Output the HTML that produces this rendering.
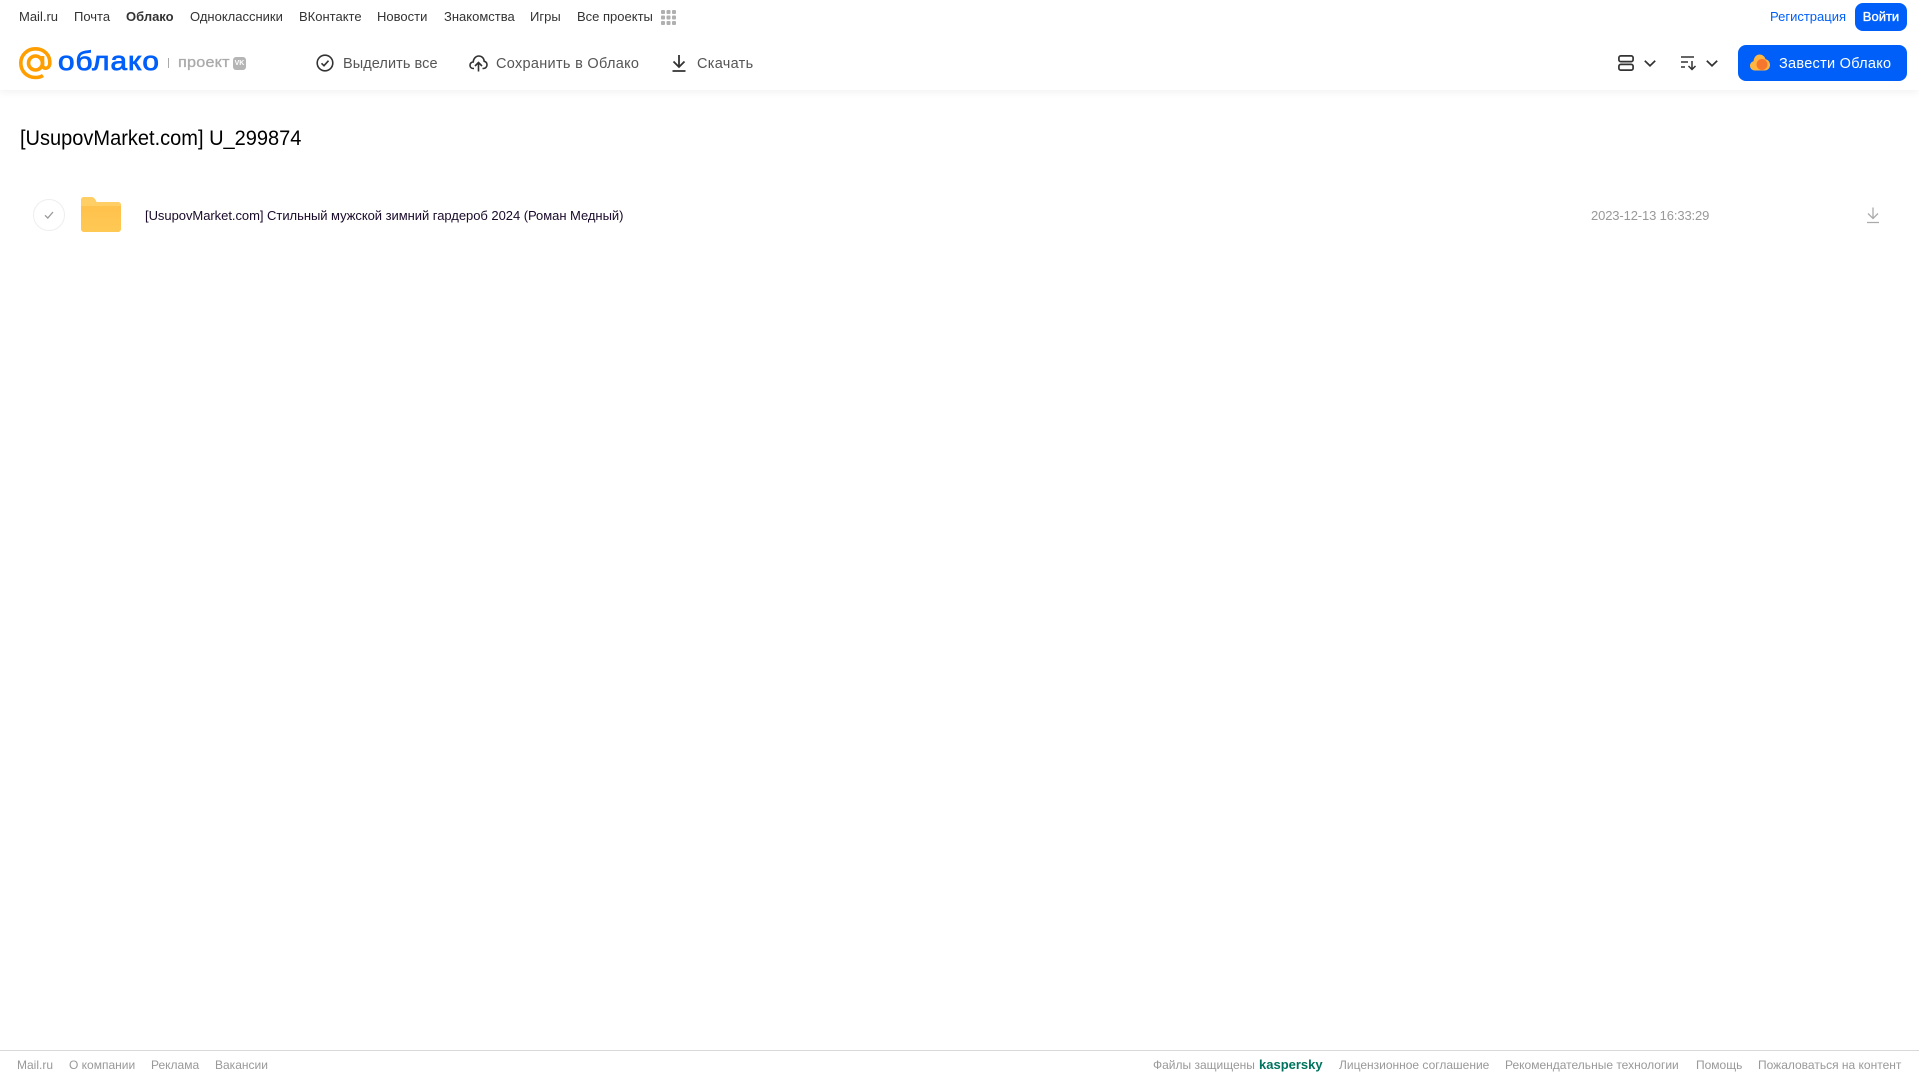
<!DOCTYPE html>
<html lang="ru"><head><meta charset="utf-8"><title>Облако</title>
<style>
html,body{margin:0;padding:0;background:#fff;width:1919px;height:1079px;overflow:hidden}
body{position:relative;font-family:"Liberation Sans",sans-serif;color:#333}
.t{position:absolute;white-space:nowrap;line-height:16px}
.n{top:9px;font-size:13px;color:#333}
.a{top:55px;font-size:14.5px;color:#555;line-height:18px}
.f{top:1057px;font-size:12px;color:#999}
svg{position:absolute;overflow:visible}
#hd{position:absolute;left:0;top:0;width:1919px;height:90px;background:#fff;box-shadow:0 2px 8px rgba(0,0,0,.06)}
#ft{position:absolute;left:0;top:1050px;width:1919px;height:1px;background:#d9d9d9}
</style></head><body>
<div id="hd"></div>
<span class="t n" style="left:19px">Mail.ru</span>
<span class="t n" style="left:74px">Почта</span>
<span class="t n" style="left:126px;font-weight:bold">Облако</span>
<span class="t n" style="left:190px">Одноклассники</span>
<span class="t n" style="left:299px">ВКонтакте</span>
<span class="t n" style="left:377px">Новости</span>
<span class="t n" style="left:444px">Знакомства</span>
<span class="t n" style="left:530px">Игры</span>
<span class="t n" style="left:577px">Все проекты</span>
<svg style="left:661px;top:10px" width="15" height="15" fill="#b0b0b0"><rect width="4" height="4" rx="1"/><rect x="5.500" width="4" height="4" rx="1"/><rect x="11" width="4" height="4" rx="1"/><rect y="5.500" width="4" height="4" rx="1"/><rect x="5.500" y="5.500" width="4" height="4" rx="1"/><rect x="11" y="5.500" width="4" height="4" rx="1"/><rect y="11" width="4" height="4" rx="1"/><rect x="5.500" y="11" width="4" height="4" rx="1"/><rect x="11" y="11" width="4" height="4" rx="1"/></svg>
<span class="t" style="left:1770px;top:9px;font-size:13px;color:#005ff9">Регистрация</span>
<div style="position:absolute;left:1855px;top:3px;width:52px;height:28px;border-radius:8px;background:#005ff9;color:#fff;font-size:13px;-webkit-text-stroke:.35px #fff;line-height:28px;text-align:center">Войти</div>

<svg style="left:19px;top:47px" width="33" height="33" viewBox="0 0 33 33" fill="none" stroke="#ff9e00" stroke-width="3.600"><circle cx="16.500" cy="16" r="7"/><path d="M23.500 9V18C23.500 22.500 30 22.500 30.800 17C31.500 8 25 1.800 16.500 1.800C8 1.800 1.800 8.200 1.800 16C1.800 24.500 8.200 30.500 16.500 30.500C19.500 30.500 22 29.800 24 28.500"/></svg>
<span class="t" style="left:58px;top:45px;font-size:27px;line-height:32px;color:#005ff9;-webkit-text-stroke:.8px #005ff9;letter-spacing:.9px;transform:scaleX(1.1);transform-origin:0 50%">облако</span>
<div style="position:absolute;left:168px;top:58px;width:1px;height:10px;background:#aaa"></div>
<span class="t" style="left:178px;top:54px;font-size:15px;line-height:17px;color:#aaa;-webkit-text-stroke:.3px #aaa;letter-spacing:.2px;transform:scaleX(1.08);transform-origin:0 50%">проект</span>
<div style="position:absolute;left:233px;top:57px;width:13px;height:13px;border-radius:3px;background:#b5b5b5;color:#fff;font-size:7px;font-weight:bold;line-height:13px;text-align:center">VK</div>

<svg style="left:316px;top:54px" width="18" height="18" fill="none" stroke="#333" stroke-width="1.600"><circle cx="9" cy="9" r="7.800"/><path d="M5.500 9.300L8 11.700L12.500 6.700"/></svg>
<span class="t a" style="left:343px;letter-spacing:.07px">Выделить все</span>
<svg style="left:469px;top:54px" width="19" height="18" fill="none" stroke="#333" stroke-width="1.600"><path d="M5 14.500H4.500C2.300 14.500 1 13 1 11.200C1 9.300 2.500 8 4.200 8C4.500 4.500 6.800 2 9.800 2C13 2 15 4.300 15.200 7.300C17 7.700 18 9.200 18 10.800C18 12.800 16.500 14.500 14.300 14.500H13.500"/><path d="M9.500 17.500V8.500M6 12L9.500 8.500L13 12"/></svg>
<span class="t a" style="left:496px;letter-spacing:.3px">Сохранить в Облако</span>
<svg style="left:671px;top:54px" width="16" height="18" fill="none" stroke="#333" stroke-width="1.800"><path d="M8 1V12.500M2.500 7.500L8 13L13.500 7.500M1.500 17H14.500"/></svg>
<span class="t a" style="left:697px;letter-spacing:.3px">Скачать</span>

<svg style="left:1618px;top:55px" width="16" height="16" fill="none" stroke="#333" stroke-width="1.700"><rect x=".9" y=".9" width="14.200" height="5.700" rx="1.800"/><rect x=".9" y="9.400" width="14.200" height="5.700" rx="1.800"/></svg>
<svg style="left:1644px;top:60px" width="12" height="7" fill="none" stroke="#333" stroke-width="1.700"><path d="M.8 .8L6 5.800L11.200 .8"/></svg>
<svg style="left:1681px;top:56px" width="16" height="14" fill="none" stroke="#333" stroke-width="1.500"><path d="M0 1H13M0 6H7M0 11H4M11 5V13.500M7.500 10L11 13.500L14.500 10"/></svg>
<svg style="left:1706px;top:60px" width="12" height="7" fill="none" stroke="#333" stroke-width="1.700"><path d="M.8 .8L6 5.800L11.200 .8"/></svg>
<div style="position:absolute;left:1738px;top:45px;width:169px;height:36px;border-radius:8px;background:#005ff9"></div>
<svg style="left:1750px;top:54px" width="20" height="17"><path d="M5 16.500C2 16.500 0 14.500 0 11.800C0 9.500 1.500 7.800 3.500 7.300C4 3 6.500 .5 9.500 .5C12.500 .5 14.800 2.500 15.500 5.300C18 5.800 20 8 20 11C20 14.300 17.500 16.500 14.500 16.500Z" fill="#ffb640"/><circle cx="12" cy="10.500" r="5.500" fill="#f5762c"/></svg>
<span class="t a" style="left:1779px;color:#fff;letter-spacing:.28px">Завести Облако</span>

<span class="t" style="left:20px;top:127px;font-size:21px;line-height:24px;color:#000;transform:scaleX(.953);transform-origin:0 50%">[UsupovMarket.com] U_299874</span>
<svg style="left:33px;top:199px" width="32" height="32" fill="none"><circle cx="16" cy="16" r="15.500" stroke="#eee"/><path d="M12 16.300L14.800 19L20 13" stroke="#999" stroke-width="1.300"/></svg>
<svg style="left:81px;top:197px" width="40" height="35"><defs><linearGradient id="g" x1="0" y1="0" x2="0" y2="1"><stop offset="0" stop-color="#ffbf48"/><stop offset="1" stop-color="#ffc955"/></linearGradient></defs><path d="M0 3C0 1.300 1.300 0 3 0H10C12 0 13.500 1 14.500 3L15.500 5H37C38.700 5 40 6.300 40 8V32C40 33.700 38.700 35 37 35H3C1.300 35 0 33.700 0 32Z" fill="url(#g)"/><path d="M0 3C0 1.300 1.300 0 3 0H10C12 0 13.500 1 14.500 3L15.500 5H37C38.700 5 40 6.300 40 8V9H0Z" fill="#ffcf66"/></svg>
<span class="t" style="left:145px;top:208px;font-size:13px;letter-spacing:-.04px;color:#1a0a2a">[UsupovMarket.com] Стильный мужской зимний гардероб 2024 (Роман Медный)</span>
<span class="t" style="left:1591px;top:208px;font-size:13px;letter-spacing:-.13px;color:#999">2023-12-13 16:33:29</span>
<svg style="left:1866px;top:207px" width="14" height="17" fill="none" stroke="#aaa" stroke-width="1.300"><path d="M7 .5V11M2 6.500L7 11.500L12 6.500M1 15.500H13"/></svg>

<div id="ft"></div>
<span class="t f" style="left:17px">Mail.ru</span>
<span class="t f" style="left:69px">О компании</span>
<span class="t f" style="left:151px">Реклама</span>
<span class="t f" style="left:215px">Вакансии</span>
<span class="t f" style="left:1153px">Файлы защищены</span>
<span class="t f" style="left:1259px;font-size:13px;font-weight:bold;color:#00735f">kaspersky</span>
<span class="t f" style="left:1339px">Лицензионное соглашение</span>
<span class="t f" style="left:1505px">Рекомендательные технологии</span>
<span class="t f" style="left:1696px">Помощь</span>
<span class="t f" style="left:1758px">Пожаловаться на контент</span>
</body></html>
